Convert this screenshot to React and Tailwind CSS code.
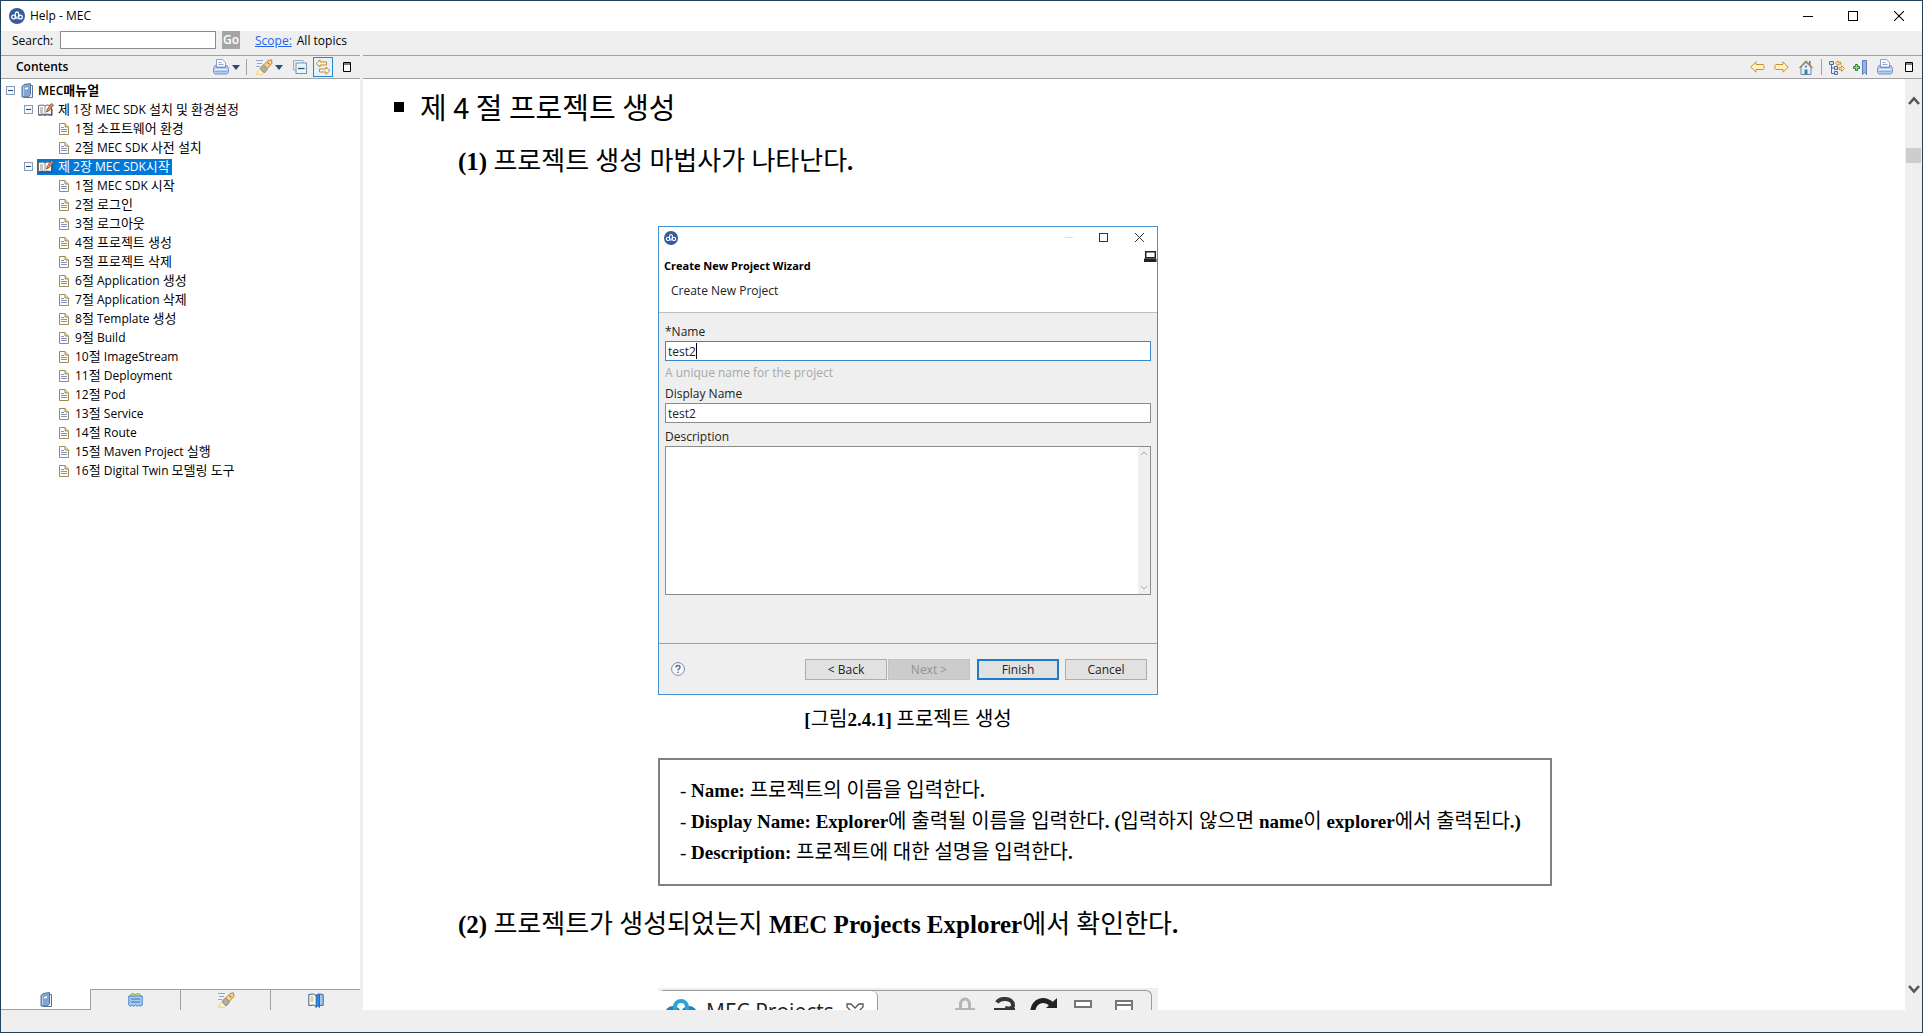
import React from "react";

const UI = "font-['Open_Sans','Noto_Sans_CJK_KR',sans-serif]";

/* Splits a string so that Latin runs and Hangul runs can be styled apart. */
function Mixed({ text, ko, latin = "font-bold" }) {
  return text.split(/([\uac00-\ud7a3]+)/).map((part, i) => (
    <span key={i} className={i % 2 ? ko : latin}>{part}</span>
  ));
}

const Logo = ({ size = "h-4 w-4" }) => (
  <svg viewBox="0 0 16 16" className={"shrink-0 " + size}>
    <circle cx="8" cy="8" r="8" fill="#325c9c" />
    <g fill="none" stroke="#fff" strokeWidth="1.3">
      <circle cx="4.6" cy="9" r="1.9" />
      <circle cx="11.4" cy="9" r="1.9" />
      <path d="M6.4 9.6V5.6a1.6 1.6 0 0 1 3.2 0v4M8 8.6v2.6" />
    </g>
  </svg>
);

const Printer = () => (
  <svg viewBox="0 0 16 16" className="h-4 w-4 shrink-0">
    <path d="M3.500 8V.5h6L12.500 3.500V8z" fill="#f7faff" stroke="#93a5c8" />
    <path d="M5.500 3.500h3M5.500 5.500h5" stroke="#8fa8d8" />
    <path d="M3.500 6.500H2L.5 9.500v4L2 15h12l1.500-1.500v-4L14 6.500h-1.500v2h-9z" fill="#b4caee" stroke="#7a93c4" />
    <path d="M1.500 10.500h13" stroke="#eef4fd" />
    <path d="M2 12.500h12" stroke="#8eabdd" />
  </svg>
);

const Caret = () => (
  <svg viewBox="0 0 8 5" className="h-[5px] w-2 shrink-0"><path d="M0 0h8L4 5z" fill="#2d4a7c" /></svg>
);

const Torch = () => (
  <svg viewBox="0 0 18 16" className="h-4 w-[18px] shrink-0">
    <path d="M1 1.500h7M2 4.500h5M1 7.500h4" stroke="#8fa3d6" />
    <path d="M5.500 9.500l4 4-3 2-5 .3 1-3.800z" fill="#fdf0b8" stroke="#e2c15c" strokeWidth=".6" />
    <path d="M6 8l2.500-2 4 4-2.500 3.500-2-.5-2.500-3z" fill="#b4aea8" stroke="#7d766e" strokeWidth=".7" />
    <path d="M8.500 6l4.500-4.500L16.500.8l.5 3.400-4.500 5.300z" fill="#f7cf84" stroke="#b5803a" strokeWidth=".9" />
    <path d="M12.500 3.500l1.800 1.800" stroke="#6b532f" />
  </svg>
);

const CollapseAll = () => (
  <svg viewBox="0 0 14 14" className="h-3.5 w-3.5 shrink-0">
    <path d="M10 2.500V.5H.5v9.500h2" fill="none" stroke="#8fb0c6" />
    <rect x="3" y="3" width="10.500" height="10.500" fill="#e9f4fb" stroke="#6d97b4" />
    <path d="M5 8.500h6.500" stroke="#24527a" strokeWidth="1.300" />
  </svg>
);

const Sync = () => (
  <svg viewBox="0 0 16 16" className="h-4 w-4">
    <path d="M5 .8L1.200 4.500 5 8V6h6.500V3H5zM11 8l3.800 3.700L11 15.200V13H4.500v-3H11z" fill="#fff6d2" stroke="#c98a24" />
  </svg>
);

const Maximize = () => (
  <svg viewBox="0 0 8 10" className="h-2.5 w-2 shrink-0">
    <path d="M.5.5h7v9h-7z" fill="#fff" stroke="#000" />
    <path d="M0 2h8" stroke="#000" />
  </svg>
);

const Arrow = ({ flip }) => (
  <svg viewBox="0 0 15 12" className={"h-3 w-[15px] " + (flip ? "-scale-x-100" : "")}>
    <path d="M6 .8L.8 6 6 11.200V8.500h7.200l.8-.8V4.300l-.8-.8H6z" fill="#fff3c6" stroke="#cf8f2c" strokeLinejoin="round" />
  </svg>
);

const Home = () => (
  <svg viewBox="0 0 14 15" className="h-[15px] w-3.5">
    <path d="M10 1h1.500v4H10z" fill="#a05a48" />
    <path d="M2 7v7.500h10V7L7 2.500z" fill="#e6eefa" stroke="#6b85b5" />
    <path d="M.5 8L7 1.200 13.500 8" fill="none" stroke="#9a8858" strokeWidth="1.400" />
    <path d="M5.500 9.500h3v5h-3z" fill="#3b8a83" />
    <path d="M6 6.500h2" stroke="#56739f" strokeWidth="1.500" />
  </svg>
);

const TreeSync = () => (
  <svg viewBox="0 0 16 15" className="h-[15px] w-4">
    <path d="M2.500 4v9.500H7M2.500 8H6" fill="none" stroke="#4c6ea4" />
    <path d="M.5 1.500h4v3h-4zM5.500 6.500h3v3h-3zM5.500 11.500h3v3h-3z" fill="#cfe0f7" stroke="#4c6ea4" />
    <path d="M9 .8L6.500 3.200 9 5.600V4.200h3v-2H9zM12.500 5.500l3 3-3 3v-2H10v-2h2.500z" fill="#ffe9a6" stroke="#c98a24" strokeWidth=".9" />
  </svg>
);

const AddBookmark = () => (
  <svg viewBox="0 0 15 15" className="h-[15px] w-[15px]">
    <path d="M2.500 4.500h2v2h2v2h-2v2h-2v-2h-2v-2h2z" fill="#8fdc8a" stroke="#2b7f35" />
    <path d="M9.500.5h4v14l-2-2-2 2z" fill="#92b2e4" stroke="#5f80b8" />
  </svg>
);

const Book = () => (
  <svg viewBox="0 0 12 15" className="h-[15px] w-3 shrink-0">
    <path d="M2.500 14.500h9V2.500h-2" fill="#f4f4f4" stroke="#5d7494" />
    <path d="M1 3.500L3 1.500 9.500.5v11l-1.800 2.200L1 14z" fill="#84a5cd" stroke="#54749f" />
    <path d="M2.500 4v9" stroke="#b5cdea" />
    <path d="M4 5l3-.8v1.800l-3 .6z" fill="#fff" />
  </svg>
);

const OpenBook = () => (
  <svg viewBox="0 0 16 13" className="h-[13px] w-4 shrink-0">
    <path d="M.5 2.500L5 2l2 1 2-1 4.500.5V11.500L9 11l-2 1-2-1-4.500.5z" fill="#fff" stroke="#6c6c6c" />
    <path d="M7 3v9M2 5h3M2 7h3M2 9h3" stroke="#8c8c8c" />
    <path d="M.5 12.300l5-.5 1.500.7 1.500-.7 5.500.5V6" fill="none" stroke="#30466a" />
    <path d="M8.500 9l1-3.200L13.500.5l2 1.500L11.300 7.500z" fill="#e0935b" stroke="#7a4a2a" strokeWidth=".8" />
  </svg>
);

const Page = () => (
  <svg viewBox="0 0 10 12" className="h-3 w-2.5 shrink-0">
    <path d="M.5.5H6L9.500 4v7.500h-9z" fill="#fdfdfd" stroke="#9b8b55" />
    <path d="M6 .5V4h3.500" fill="#e9d9a0" stroke="#9b8b55" />
    <path d="M2 4.500h3M2 6.500h6M2 8.500h6" stroke="#7e93bd" />
  </svg>
);

const Expander = () => (
  <button aria-label="Collapse" className="grid h-[9px] w-[9px] shrink-0 place-items-center border border-[#8a9db8] bg-[#f4f7fb]">
    <span className="h-px w-[5px] bg-[#26457a]" />
  </button>
);

const IndexIcon = () => (
  <svg viewBox="0 0 15 14" className="h-3.5 w-[15px]">
    <path d="M2 3L3.500.8h3L7.500 2l1-1.200h3L13 3" fill="#cfe8a0" stroke="#7fa84b" />
    <path d="M.8 3h13.400v9l-1.700 1.300-1.600-1.300-1.700 1.300-1.700-1.300-1.700 1.300L4.100 12l-1.700 1.300L.8 12z" fill="#a6cdf3" stroke="#4a80c0" />
    <path d="M3 6h9M3 9h9" stroke="#3c6db0" />
  </svg>
);

const BookmarkBook = () => (
  <svg viewBox="0 0 16 15" className="h-[15px] w-4">
    <path d="M.8 1.500L5.500 1 8 2.500 10 1l5 .5v11L10 12l-2 1.500L6 12l-5.200.5z" fill="#fffbe9" stroke="#3d5f91" />
    <path d="M11.500 1.200l3.500.3v11l-3.500-.3z" fill="#a7c9ee" stroke="#3d5f91" strokeWidth=".7" />
    <path d="M2.500 4h3M2.500 6h3M2.500 8h3" stroke="#bba66c" />
    <path d="M8 2h3.500v12.700L9.800 12.700 8 14.700z" fill="#2f87e0" stroke="#1d5ea8" strokeWidth=".7" />
  </svg>
);

const HelpIcon = () => (
  <svg viewBox="0 0 14 14" className="h-3.5 w-3.5">
    <circle cx="7" cy="7" r="6.400" fill="#f7f9fc" stroke="#7b8ba3" />
    <path d="M5 5.400C5 2.800 9 2.900 9 5.200 9 6.700 7 6.700 7 8.600M7 9.700v1.400" fill="none" stroke="#54698b" strokeWidth="1.400" />
  </svg>
);

const chapters = [
  { title: "제 1장 MEC SDK 설치 및 환경설정", items: ["1절 소프트웨어 환경", "2절 MEC SDK 사전 설치"] },
  {
    title: "제 2장 MEC SDK시작",
    selected: true,
    items: [
      "1절 MEC SDK 시작", "2절 로그인", "3절 로그아웃", "4절 프로젝트 생성", "5절 프로젝트 삭제",
      "6절 Application 생성", "7절 Application 삭제", "8절 Template 생성", "9절 Build",
      "10절 ImageStream", "11절 Deployment", "12절 Pod", "13절 Service", "14절 Route",
      "15절 Maven Project 실행", "16절 Digital Twin 모델링 도구",
    ],
  },
];

const TreeText = ({ text }) => <span className="whitespace-pre"><Mixed text={text} ko="text-[13px]" latin="" /></span>;

function Sidebar() {
  return (
    <aside className="flex w-[359px] shrink-0 flex-col bg-white">
      <div className="flex h-6 items-center border-y border-[#a0a0a0] bg-[#efefef] pl-[15px] pr-[9px]">
        <h2 className="flex-1 text-xs font-semibold">Contents</h2>
        <button aria-label="Print" className="flex items-center gap-[3px]"><Printer /><Caret /></button>
        <span className="ml-1.5 mr-2 h-4 w-px bg-[#a0a0a0]" />
        <button aria-label="Search" className="flex items-center gap-0.5"><Torch /><Caret /></button>
        <button aria-label="Collapse all" className="ml-2.5"><CollapseAll /></button>
        <button aria-label="Link with contents" className="ml-1.5 grid h-5 w-5 place-items-center border border-[#2a84d2] bg-[#e5f1fb]"><Sync /></button>
        <button aria-label="Maximize" className="ml-2.5"><Maximize /></button>
      </div>
      <ul className="flex-1 pt-0.5 text-xs leading-[19px]">
        <li>
          <div className="flex h-[19px] items-center pl-[5px] font-semibold">
            <Expander /><span className="ml-1.5"><Book /></span>
            <span className="ml-[5px] whitespace-nowrap"><Mixed text="MEC매뉴얼" ko="text-[13px]" latin="" /></span>
          </div>
          <ul>
            {chapters.map((c) => (
              <li key={c.title}>
                <div className="flex h-[19px] items-center pl-[23px]">
                  <Expander />
                  <span className={"ml-1 flex h-4 items-center whitespace-nowrap pl-px pr-0.5 " + (c.selected ? "bg-[#0078d7] text-white" : "")}>
                    <OpenBook /><span className="ml-1"><TreeText text={c.title} /></span>
                  </span>
                </div>
                <ul>
                  {c.items.map((t) => (
                    <li key={t} className="flex h-[19px] items-center gap-1.5 whitespace-nowrap pl-[58px]"><Page /><TreeText text={t} /></li>
                  ))}
                </ul>
              </li>
            ))}
          </ul>
        </li>
      </ul>
      <div className="flex h-[21px] bg-[#efefef]">
        <button aria-label="Contents" className="grid flex-1 place-items-center border-b border-[#a0a0a0] bg-white"><Book /></button>
        <button aria-label="Index" className="grid flex-1 place-items-center border-l border-t border-[#a0a0a0]"><IndexIcon /></button>
        <button aria-label="Search" className="grid flex-1 place-items-center border-l border-t border-[#a0a0a0]"><Torch /></button>
        <button aria-label="Bookmarks" className="grid flex-1 place-items-center border-l border-t border-[#a0a0a0]"><BookmarkBook /></button>
      </div>
    </aside>
  );
}

const btn = "h-[21px] w-[82px] border border-[#adadad] bg-[#e1e1e1] text-xs leading-[19px]";

function Wizard() {
  return (
    <div className={"w-[500px] border border-[#4a90cc] bg-[#efefef] text-xs text-[#222] " + UI}>
      <div className="h-[86px] border-b border-[#bdbdbd] bg-white">
        <div className="flex h-[21px] items-center pl-[5px] pr-[13px]">
          <span className="flex-1"><Logo size="h-3.5 w-3.5" /></span>
          <span className="mr-[26px] h-px w-2 bg-[#d5dce4]" />
          <button aria-label="Maximize" className="mr-[27px] h-[9px] w-[9px] border border-[#333]" />
          <button aria-label="Close">
            <svg viewBox="0 0 9 9" className="h-[9px] w-[9px]"><path d="M0 0l9 9M9 0L0 9" stroke="#333" /></svg>
          </button>
        </div>
        <div className="flex h-[13px] justify-end pt-0.5">
          <svg viewBox="0 0 13 12" className="h-3 w-[13px]"><path d="M1.700 1.700h9.600v6H1.700z" fill="#fff" stroke="#222" strokeWidth="1.500" /><path d="M0 8.500h12.500V12H0z" fill="#222" /></svg>
        </div>
        <h3 className="pl-[5px] text-[11px] font-bold leading-[10px] text-black">Create New Project Wizard</h3>
        <p className="pl-3 pt-3 leading-4">Create New Project</p>
      </div>
      <div className="flex h-[331px] flex-col border-b border-[#a0a0a0] px-1.5 pt-2.5">
        <label htmlFor="name" className="leading-[18px]">*Name</label>
        <div className="relative">
          <input id="name" defaultValue="test2" className="block h-5 w-full border border-[#3a86c8] bg-white px-0.5 outline-none" />
          <span className="absolute left-[31px] top-0.5 h-4 w-px bg-black" />
        </div>
        <p className="mt-1 leading-4 text-[#a8a8a8]">A unique name for the project</p>
        <label htmlFor="display" className="mt-1 leading-[18px]">Display Name</label>
        <input id="display" defaultValue="test2" className="h-5 w-full border border-[#8c8c8c] bg-white px-0.5 outline-none" />
        <label htmlFor="desc" className="pt-1 leading-[19px]">Description</label>
        <div className="flex h-[149px] border border-[#8c8c8c] bg-white">
          <textarea id="desc" className="flex-1 resize-none outline-none" />
          <div className="flex w-3 flex-col items-center justify-between bg-[#efefef] py-1">
            <svg viewBox="0 0 6 4" className="h-1 w-1.5"><path d="M0 4l3-3 3 3" fill="none" stroke="#aaa" /></svg>
            <svg viewBox="0 0 6 4" className="h-1 w-1.5"><path d="M0 0l3 3 3-3" fill="none" stroke="#aaa" /></svg>
          </div>
        </div>
      </div>
      <div className="flex h-[50px] items-center pl-3 pr-2.5">
        <button aria-label="Help" className="flex-1"><HelpIcon /></button>
        <button className={btn}>&lt; Back</button>
        <button disabled className="ml-px h-[21px] w-[82px] border border-[#c4c4c4] bg-[#cccccc] text-xs leading-[19px] text-[#939393]">Next &gt;</button>
        <button className="ml-[7px] h-[21px] w-[82px] border-2 border-[#1f7ac8] bg-[#e1e1e1] text-xs leading-[17px]">Finish</button>
        <button className={"ml-[6px] " + btn}>Cancel</button>
      </div>
    </div>
  );
}

function ProjectsStrip() {
  return (
    <div className={"mt-[45px] flex h-20 w-[500px] shrink-0 bg-[#efefef] pr-1.5 pt-0.5 " + UI}>
      <div className="flex flex-1 items-start rounded-t-md border-r border-t border-[#999]">
        <div className="flex h-20 w-[220px] items-start rounded-tr-md border-r border-[#999] bg-white pl-2 pt-2">
          <svg viewBox="0 0 30 24" className="h-6 w-[30px] shrink-0"><g fill="none" stroke="#2c7cc0" strokeWidth="4"><circle cx="7" cy="15" r="6" /><circle cx="23" cy="15" r="6" /><path d="M9 15V8a6 6 0 0 1 12 0v7" stroke="#2ba3d8" /></g></svg>
          <span className="ml-2.5 whitespace-nowrap text-[21px] leading-6 text-[#222]">MEC Projects</span>
          <svg viewBox="0 0 18 16" className="ml-3 mt-1 h-4 w-[18px] shrink-0"><path d="M1 1h4l4 4 4-4h4v3l-4 4 4 4v3h-4l-4-4-4 4H1v-3l4-4-4-4z" fill="#fff" stroke="#555" strokeWidth="1.300" /></svg>
        </div>
        <div className="flex items-start pl-[77px] pt-1.5">
          <svg viewBox="0 0 20 20" className="h-5 w-5"><path d="M5.500 12V7a4.500 5 0 0 1 9 0v5" fill="none" stroke="#b5b5b5" strokeWidth="3" /><path d="M0 11h20v9H0z" fill="#b5b5b5" /></svg>
          <svg viewBox="0 0 22 20" className="ml-[19px] h-5 w-[22px]"><path d="M3 5.500c3-5 16-5 16 2.500 0 4-5 4-8 3" fill="none" stroke="#3a3434" strokeWidth="4" /><path d="M0 11h21v9H0z" fill="#3a3434" /></svg>
          <svg viewBox="0 0 28 20" className="ml-3.5 h-5 w-7"><path d="M2.500 15C4 3 14 .5 22 7.500" fill="none" stroke="#222" strokeWidth="5" /><path d="M27 1v10H16z" fill="#222" /></svg>
          <svg viewBox="0 0 18 8" className="ml-4 mt-[3px] h-2 w-[18px]"><path d="M1 1h16v6H1z" fill="#fff" stroke="#777" strokeWidth="2" /></svg>
          <svg viewBox="0 0 18 18" className="ml-[23px] mt-[3px] h-[18px] w-[18px]"><path d="M1 1h16v16H1zM1 5h16" fill="#fff" stroke="#777" strokeWidth="2" /></svg>
        </div>
      </div>
    </div>
  );
}

const fields = [
  "Name: 프로젝트의 이름을 입력한다.",
  "Display Name: Explorer에 출력될 이름을 입력한다. (입력하지 않으면 name이 explorer에서 출력된다.)",
  "Description: 프로젝트에 대한 설명을 입력한다.",
];

const Chevron = ({ down }) => (
  <svg viewBox="0 0 12 9" className={"h-[9px] w-3 " + (down ? "rotate-180" : "")}><path d="M1 8l5-5.500L11 8" fill="none" stroke="#555" strokeWidth="2.600" /></svg>
);

export default function App() {
  return (
    <div className={"flex h-screen flex-col overflow-hidden border border-[#23445c] bg-[#efefef] text-black " + UI}>
      <header className="flex h-[30px] shrink-0 items-center bg-white pl-2 pr-[18px] text-xs">
        <Logo />
        <h1 className="ml-[5px] flex-1">Help - MEC</h1>
        <button aria-label="Minimize" className="mr-[35px]"><svg viewBox="0 0 10 10" className="h-2.5 w-2.5"><path d="M0 5.500h10" stroke="#000" /></svg></button>
        <button aria-label="Maximize" className="mr-9 h-2.5 w-2.5 border border-black" />
        <button aria-label="Close"><svg viewBox="0 0 10 10" className="h-2.5 w-2.5"><path d="M0 0l10 10M10 0L0 10" stroke="#000" strokeWidth="1.100" /></svg></button>
      </header>
      <form className="flex h-6 shrink-0 items-start pl-[11px] text-xs leading-5">
        <label htmlFor="search" className="w-12">Search:</label>
        <input id="search" className="h-[18px] w-[156px] border border-[#8c8c8c] bg-white px-1 outline-none" />
        <button type="button" className="ml-1.5 h-[18px] w-[18px] bg-[#a5a5a5] font-semibold leading-[18px] text-white">Go</button>
        <a href="#scope" className="ml-[15px] text-[#2563eb] underline">Scope:</a>
        <span className="ml-[5px]">All topics</span>
      </form>
      <div className="flex min-h-0 flex-1">
        <Sidebar />
        <main className="ml-[3px] flex min-w-0 flex-1 flex-col">
          <div className="flex h-6 shrink-0 items-center justify-end border-y border-[#a0a0a0] pr-[9px]">
            <button aria-label="Back"><Arrow /></button>
            <button aria-label="Forward" className="ml-[9px]"><Arrow flip /></button>
            <button aria-label="Home" className="ml-2.5"><Home /></button>
            <span className="ml-2 mr-[7px] h-4 w-px bg-[#a0a0a0]" />
            <button aria-label="Show in contents"><TreeSync /></button>
            <button aria-label="Bookmark" className="ml-2"><AddBookmark /></button>
            <button aria-label="Print" className="ml-[9px]"><Printer /></button>
            <button aria-label="Maximize" className="ml-3"><Maximize /></button>
          </div>
          <div className="flex min-h-0 flex-1">
            <article className="flex min-w-0 flex-1 flex-col items-start overflow-hidden bg-white font-['Liberation_Serif','Noto_Sans_CJK_KR',serif]">
              <h2 className="ml-[31px] mt-2.5 flex h-9 items-center whitespace-nowrap text-[29px] font-['Noto_Sans_CJK_KR',sans-serif]">
                <span className="mr-4 h-2.5 w-2.5 bg-black" />제 4 절 프로젝트 생성
              </h2>
              <h3 className="ml-[95px] mt-[19px] h-9 whitespace-nowrap text-[25px] leading-9"><Mixed text="(1) 프로젝트 생성 마법사가 나타난다." ko="text-[26px]" /></h3>
              <div className="ml-[295px] mt-[46px] flex flex-col items-start">
                <Wizard />
                <p className="mt-2.5 h-7 w-[500px] whitespace-nowrap text-center text-[19px] leading-7"><Mixed text="[그림2.4.1] 프로젝트 생성" ko="text-[20px]" /></p>
                <ul className="mt-[25px] border-2 border-[#808080] pb-4 pl-5 pr-[29px] pt-[15px] text-[19px]">
                  {fields.map((f) => (
                    <li key={f} className="h-[31px] whitespace-nowrap leading-[31px]">- <Mixed text={f} ko="text-[20px]" /></li>
                  ))}
                </ul>
              </div>
              <h3 className="ml-[95px] mt-[21px] h-9 whitespace-nowrap text-[25px] leading-9"><Mixed text="(2) 프로젝트가 생성되었는지 MEC Projects Explorer에서 확인한다." ko="text-[26px]" /></h3>
              <div className="ml-[295px]"><ProjectsStrip /></div>
            </article>
            <div className="flex w-[17px] shrink-0 flex-col items-center pb-4 pt-[17px]">
              <Chevron />
              <span className="mt-[43px] h-[15px] w-[15px] bg-[#cdcdcd]" />
              <span className="flex-1" />
              <Chevron down />
            </div>
          </div>
        </main>
      </div>
      <footer className="h-[22px] shrink-0" />
    </div>
  );
}
